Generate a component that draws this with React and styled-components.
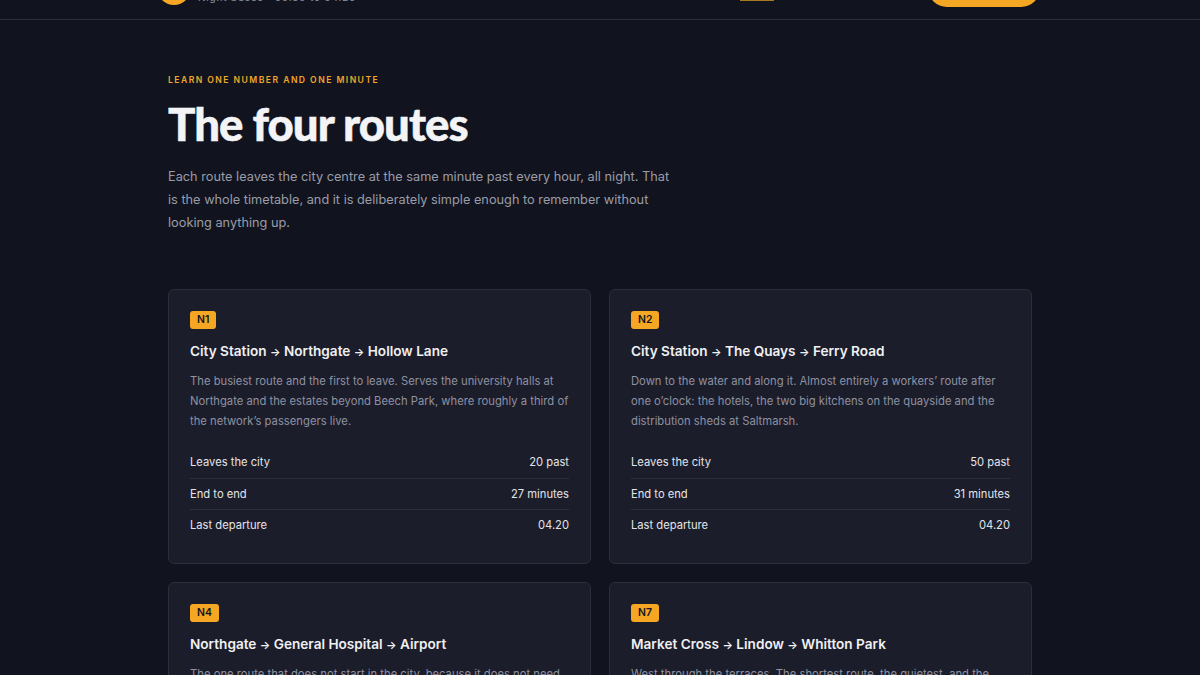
import React from 'react'
import styled, { createGlobalStyle } from 'styled-components'

const routes = [
	{
		code: 'N1',
		stops: ['City Station', 'Northgate', 'Hollow Lane'],
		text: 'The busiest route and the first to leave. Serves the university halls at Northgate and the estates beyond Beech Park, where roughly a third of the network’s passengers live.',
		stats: [['Leaves the city', '20 past'], ['End to end', '27 minutes'], ['Last departure', '04.20']],
	},
	{
		code: 'N2',
		stops: ['City Station', 'The Quays', 'Ferry Road'],
		text: 'Down to the water and along it. Almost entirely a workers’ route after one o’clock: the hotels, the two big kitchens on the quayside and the distribution sheds at Saltmarsh.',
		stats: [['Leaves the city', '50 past'], ['End to end', '31 minutes'], ['Last departure', '04.20']],
	},
	{
		code: 'N4',
		stops: ['Northgate', 'General Hospital', 'Airport'],
		text: 'The one route that does not start in the city, because it does not need to. Runs for shift changes at the hospital and the first flights of the morning.',
		stats: [['Leaves Northgate', '05 past'], ['End to end', '38 minutes'], ['Last departure', '04.05']],
	},
	{
		code: 'N7',
		stops: ['Market Cross', 'Lindow', 'Whitton Park'],
		text: 'West through the terraces. The shortest route, the quietest, and the one most likely to wait a moment if it sees you running for the stop.',
		stats: [['Leaves the city', '35 past'], ['End to end', '22 minutes'], ['Last departure', '04.35']],
	},
]

const GlobalStyle = createGlobalStyle`
	html, body {
		margin: 0;
		height: 675px;
		overflow: hidden;
		background: #11141e;
	}
	body {
		font-family: 'Inter', 'Liberation Sans', sans-serif;
	}
`

const Page = styled.div`
	height: 675px;
	overflow: hidden;
	background: #11141e;
`

// The page is shown scrolled down, so the top of the header sits above the window
const Header = styled.header`
	height: 62px;
	margin-top: -43px;
	border-bottom: 1px solid #2b2e3b;
	padding-inline: 157px 160px;
	display: flex;
	align-items: center;
	justify-content: space-between;
`

const Brand = styled.div`
	display: flex;
	align-items: center;
	gap: 7px;
`

const BrandMark = styled.div`
	width: 34px;
	height: 34px;
	border-radius: 50%;
	background: #f5a623;
`

const BrandText = styled.div`
	display: flex;
	flex-direction: column;
	gap: 2px;
	font-size: 10px;
	line-height: 13px;
	letter-spacing: 0.83px;
	color: #8f91a0;
	span:first-child {
		color: #f0f0f2;
		font-size: 14px;
		line-height: 17px;
		font-weight: 600;
		letter-spacing: 0;
	}
`

const Nav = styled.nav`
	display: flex;
	align-items: center;
	gap: 30px;
`

const NavLink = styled.a`
	font-size: 10.5px;
	line-height: 24px;
	color: #b0b2bd;
	border-bottom: 2px solid ${(p) => (p.$active ? '#a87a20' : 'transparent')};
`

const Cta = styled.a`
	width: 112px;
	height: 38px;
	margin-left: 8px;
	border-radius: 19px;
	background: #f5a623;
	color: #11141e;
	font-size: 13px;
	font-weight: 600;
	display: flex;
	align-items: center;
	justify-content: center;
`

const Main = styled.main`
	width: 864px;
	margin-inline: auto;
	padding-top: 54px;
`

const Eyebrow = styled.p`
	margin: 0;
	font-size: 8.6px;
	line-height: 12px;
	font-weight: 600;
	letter-spacing: 1.45px;
	text-transform: uppercase;
	color: #f0a62c;
`

const Title = styled.h1`
	margin: 11px 0 0;
	font-family: 'Lato', sans-serif;
	font-size: 45.5px;
	line-height: 54px;
	font-weight: 900;
	letter-spacing: -0.9px;
	color: #f4f4f6;
	-webkit-text-stroke: 0.5px #f4f4f6;
`

const Lead = styled.p`
	margin: 14px 0 0;
	width: 510px;
	font-size: 12.75px;
	line-height: 23px;
	color: #9a9ca8;
`

const Grid = styled.section`
	margin-top: 55px;
	display: grid;
	grid-template-columns: 1fr 1fr;
	gap: 18px;
`

const Card = styled.article`
	height: 275px;
	box-sizing: border-box;
	padding: 21px;
	background: #1b1d2b;
	border: 1px solid #2b2e3b;
	border-radius: 6px;
`

const Badge = styled.span`
	display: block;
	width: fit-content;
	padding-inline: 7px;
	height: 18px;
	line-height: 18px;
	border-radius: 3px;
	background: #f5a623;
	color: #11141e;
	font-size: 10.4px;
	font-weight: 600;
`

const RouteName = styled.h2`
	margin: 10px 0 0;
	font-size: 13.6px;
	line-height: 24px;
	font-weight: 600;
	color: #f0f0f2;
`

const Arrow = styled.span`
	font-size: 11px;
`

const RouteText = styled.p`
	margin: 7px 0 0;
	font-size: 11.25px;
	line-height: 20px;
	color: #8f91a0;
`

const Stats = styled.div`
	margin-top: 16px;
`

const Stat = styled.div`
	display: flex;
	justify-content: space-between;
	padding-block: 8px;
	font-size: 11.2px;
	line-height: 14.5px;
	color: #e4e4e8;
	border-bottom: 1px solid #2b2e3b;
	&:last-child {
		border-bottom: 0;
	}
`

const App = () => {
	return (
		<Page>
			<GlobalStyle />
			<Header>
				<Brand>
					<BrandMark />
					<BrandText>
						<span>The Night Network</span>
						<span>Night buses · 00.30 to 04.20</span>
					</BrandText>
				</Brand>
				<Nav>
					<NavLink $active>Routes</NavLink>
					<NavLink>Fares</NavLink>
					<NavLink>Stops</NavLink>
					<Cta>Plan a trip</Cta>
				</Nav>
			</Header>
			<Main>
				<Eyebrow>Learn one number and one minute</Eyebrow>
				<Title>The four routes</Title>
				<Lead>
					Each route leaves the city centre at the same minute past every hour, all night. That is the whole timetable, and it is deliberately simple enough to remember without looking anything up.
				</Lead>
				<Grid>
					{routes.map((route) => (
						<Card key={route.code}>
							<Badge>{route.code}</Badge>
							<RouteName>
								{route.stops.map((stop, index) => (
									<React.Fragment key={stop}>
										{index > 0 && <> <Arrow>→</Arrow> </>}
										{stop}
									</React.Fragment>
								))}
							</RouteName>
							<RouteText>{route.text}</RouteText>
							<Stats>
								{route.stats.map(([label, value]) => (
									<Stat key={label}>
										<span>{label}</span>
										<span>{value}</span>
									</Stat>
								))}
							</Stats>
						</Card>
					))}
				</Grid>
			</Main>
		</Page>
	)
}

export default App
